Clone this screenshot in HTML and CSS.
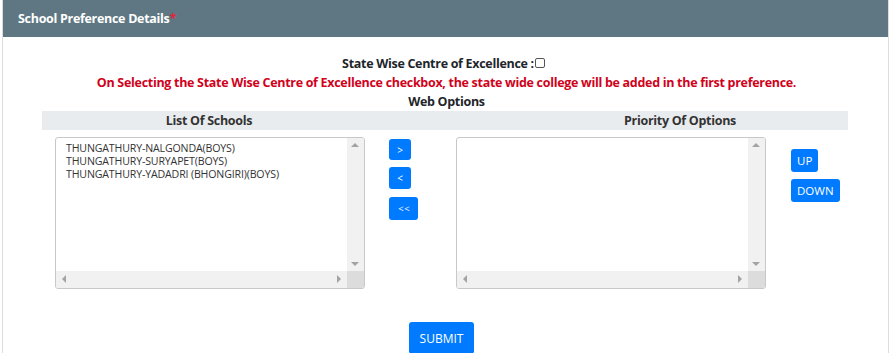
FILE: index.html
```html
<!DOCTYPE html>
<html lang="en">
<head>
  <meta charset="UTF-8">
  <title>School Preference Details</title>
  <link rel="stylesheet" href="styles.css">
</head>
<body>
  <div class="card">
    <div class="card-header">School Preference Details<span class="req">*</span></div>

    <div class="card-body">
      <div class="coe">State Wise Centre of Excellence :<span class="check"></span></div>
      <div class="coe-note">On Selecting the State Wise Centre of Excellence checkbox, the state wide college will be added in the first preference.</div>
      <div class="web-options">Web Options</div>

      <!-- column headings -->
      <div class="head-row">
        <div class="head-left">List Of Schools</div>
        <div class="head-right">Priority Of Options</div>
      </div>

      <div class="picker">
        <div class="listbox">
          <div class="list-items">
            <div>THUNGATHURY-NALGONDA(BOYS)</div>
            <div>THUNGATHURY-SURYAPET(BOYS)</div>
            <div>THUNGATHURY-YADADRI (BHONGIRI)(BOYS)</div>
          </div>
          <div class="vscroll"><span class="arr up"></span><span class="arr down"></span></div>
          <div class="hscroll"><span class="arr left"></span><span class="arr right"></span></div>
          <div class="corner"></div>
        </div>

        <div class="move-btns">
          <button class="btn">&gt;</button>
          <button class="btn">&lt;</button>
          <button class="btn">&lt; &lt;</button>
        </div>

        <div class="listbox">
          <div class="list-items"></div>
          <div class="vscroll"><span class="arr up"></span><span class="arr down"></span></div>
          <div class="hscroll"><span class="arr left"></span><span class="arr right"></span></div>
          <div class="corner"></div>
        </div>

        <div class="order-btns">
          <button class="btn">UP</button>
          <button class="btn">DOWN</button>
        </div>
      </div>

      <div class="submit-row">
        <button class="btn submit">SUBMIT</button>
      </div>
    </div>
  </div>
</body>
</html>
```

FILE: styles.css
```css
/* Base */
body {
  margin: 0;
  font-family: 'Open Sans', 'Noto Sans', sans-serif;
  color: #212529;
  background: #fff;
}

.card {
  margin-left: 2px;
  width: 885px;
  height: 360px;
  border-left: 1px solid #dcdcdc;
  border-right: 1px solid #dcdcdc;
}

.card-header {
  background: #5e7782;
  color: #fff;
  font-weight: bold;
  font-size: 12.5px;
  height: 37px;
  line-height: 37px;
  padding-left: 15px;
  letter-spacing: -0.3px;
}

.req {
  color: #e0243a;
}

.card-body {
  padding-top: 18px;
}

.coe {
  text-align: center;
  font-weight: bold;
  font-size: 12.5px;
  line-height: 18px;
  padding-right: 4px;
  letter-spacing: -0.3px;
}

.check {
  display: inline-block;
  width: 8px;
  height: 8px;
  border: 1px solid #555;
  border-radius: 2px;
  margin-left: 1px;
  vertical-align: 0px;
}

.coe-note {
  text-align: center;
  color: #d0021b;
  font-weight: bold;
  font-size: 12.5px;
  line-height: 20px;
  letter-spacing: -0.3px;
  padding-left: 2px;
}

.web-options {
  text-align: center;
  font-weight: bold;
  font-size: 12.5px;
  line-height: 18px;
  padding-left: 2px;
  letter-spacing: -0.3px;
}

.head-row {
  display: grid;
  grid-template-columns: 334px 136px 336px;
  margin-left: 39px;
  width: 806px;
  background: #e9ecef;
  height: 19px;
  line-height: 19px;
  font-weight: bold;
  font-size: 12.5px;
  color: #333;
  letter-spacing: -0.3px;
}

.head-left {
  text-align: center;
}

.head-right {
  grid-column: 3;
  text-align: center;
}

/* list boxes and buttons */
.picker {
  display: flex;
  align-items: flex-start;
  margin-top: 7px;
  margin-left: 52px;
}

.listbox {
  display: grid;
  grid-template-columns: 1fr 17px;
  grid-template-rows: 1fr 17px;
  width: 308px;
  height: 150px;
  border: 1px solid #c8c8c8;
  border-radius: 3px;
  overflow: hidden;
}

.list-items {
  padding: 4px 10px;
  font-size: 10.6px;
  line-height: 13px;
  color: #333;
  letter-spacing: -0.15px;
}

.vscroll,
.hscroll {
  position: relative;
  background: #f1f1f1;
}

.corner {
  background: #dcdcdc;
}

.arr {
  position: absolute;
  width: 0;
  height: 0;
  border: 4px solid transparent;
}

.arr.up {
  top: 5px;
  left: 4px;
  border-bottom-color: #a3a3a3;
  border-top-width: 0;
}

.arr.down {
  bottom: 5px;
  left: 4px;
  border-top-color: #a3a3a3;
  border-bottom-width: 0;
}

.arr.left {
  left: 6px;
  top: 4px;
  border-right-color: #a3a3a3;
  border-left-width: 0;
}

.arr.right {
  right: 6px;
  top: 4px;
  border-left-color: #a3a3a3;
  border-right-width: 0;
}

.btn {
  display: block;
  background: #007bff;
  color: #fff;
  border: none;
  border-radius: 3px;
  font-family: 'Open Sans', 'Noto Sans', sans-serif;
  font-size: 11px;
  padding: 0 7px;
  height: 22px;
  cursor: pointer;
}

.move-btns {
  display: flex;
  flex-direction: column;
  align-items: flex-start;
  flex: 0 0 67px;
  margin-left: 24px;
  margin-top: 2px;
}

.move-btns .btn {
  height: 21px;
  width: 22px;
  padding: 0;
  font-size: 10px;
  margin-bottom: 7px;
}

.move-btns .btn:nth-child(2) {
  height: 22px;
  margin-bottom: 8px;
}

.move-btns .btn:last-child {
  width: 29px;
  height: 23px;
  font-size: 9.5px;
  letter-spacing: -1px;
}

.order-btns {
  display: flex;
  flex-direction: column;
  gap: 7px;
  margin-left: 25px;
  margin-top: 12px;
  align-items: flex-start;
}

.order-btns .btn {
  height: 23px;
  font-size: 11.5px;
  padding: 0 6px;
}

.submit-row {
  display: flex;
  justify-content: center;
  margin-top: 33px;
  padding-right: 8px;
}

.btn.submit {
  height: 32px;
  font-size: 12px;
  padding: 0 11px;
}
```
